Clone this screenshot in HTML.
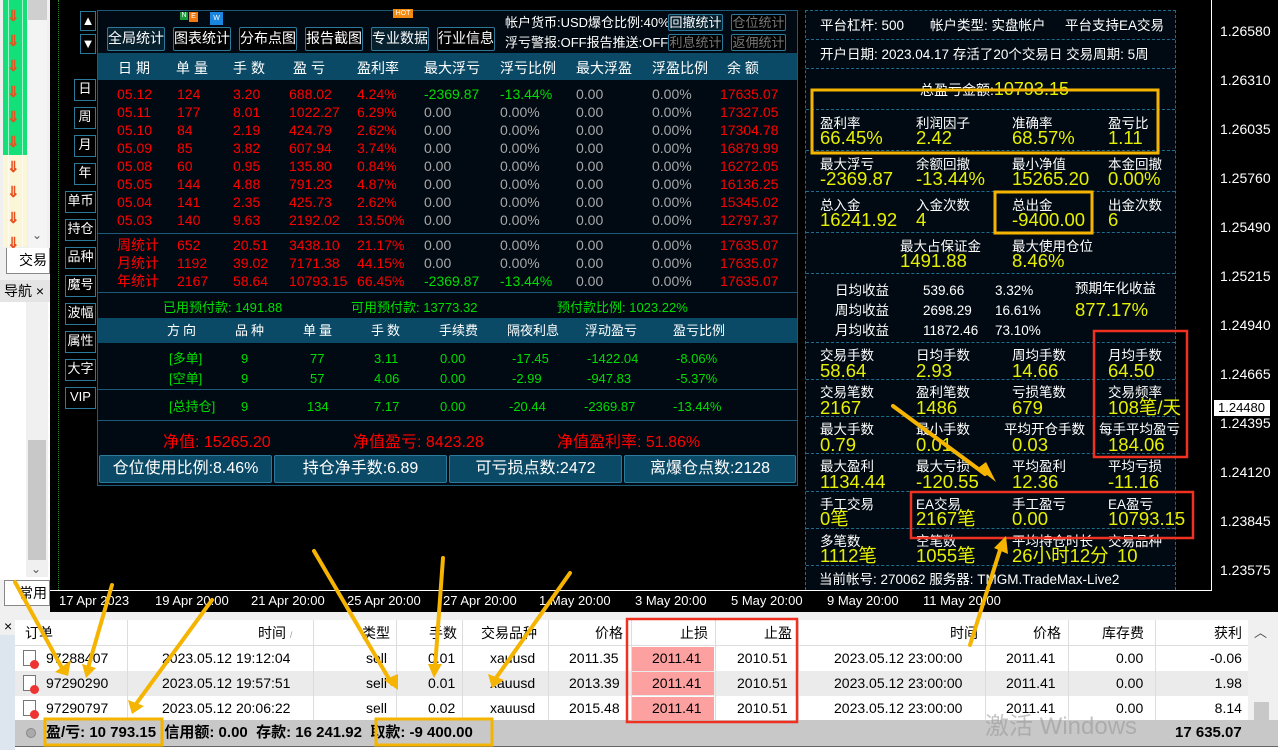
<!DOCTYPE html>
<html><head><meta charset="utf-8"><style>
*{margin:0;padding:0;box-sizing:border-box}
body{width:1278px;height:750px;overflow:hidden;position:relative;background:#000;font-family:"Liberation Sans","Noto Sans CJK SC",sans-serif;}
div,span{position:absolute;white-space:nowrap}
.t{font-size:14px;line-height:18px}
.r{color:#f00}.g{color:#0d0}.w{color:#fff}.gy{color:#a8a8a8}
.btn{border:1px solid #2b7a9c;background:#06202e;color:#fff;font-size:14px;line-height:20px;text-align:center;border-radius:2px}
.sb{border:1px solid #2b7a9c;background:#000;color:#fff;font-size:13px;line-height:18px;text-align:center}
.hl{height:0;border-top:1px dashed #1d6e8e}
.lb{color:#fff;font-size:13.5px;line-height:16px}
.v{color:#e6f000;font-size:18.5px;line-height:20px}
.tc{font-size:14px;line-height:24px;color:#000}
</style></head><body>
<!-- left toolbar -->
<div style="left:0;top:0;width:50px;height:620px;background:#f0f0f0"></div>
<div style="left:3px;top:0;width:24px;height:155px;background:#14e07a"></div>
<div style="left:3px;top:155px;width:24px;height:92px;background:#fbf6d8"></div>
<div style="left:8px;top:0;width:1px;height:247px;background:rgba(255,255,255,.6)"></div>
<div style="left:22px;top:0;width:1px;height:247px;background:rgba(255,255,255,.6)"></div>
<div style="left:28px;top:0;width:19px;height:248px;background:#f4f4f4"></div>
<div style="left:28px;top:0;width:19px;height:20px;background:#cfcfcf"></div>
<div style="left:7px;top:4px;color:#e85020;font-weight:bold;font-size:15px;line-height:25.2px;white-space:normal;width:16px">⇓<br>⇓<br>⇓<br>⇓<br>⇓<br>⇓<br>⇓<br>⇓<br>⇓<br>⇓</div>
<div style="left:32px;top:228px;color:#555;font-size:12px">⌄</div>
<div style="left:6px;top:248px;width:44px;height:26px;background:#fff;border:1px solid #888;border-top:none;font-size:14px;line-height:24px;padding-left:12px">交易</div>
<div style="left:0;top:280px;width:50px;height:22px;background:#e4e4e4;font-size:14px;line-height:22px;padding-left:4px">导航 ×</div>
<div style="left:0;top:302px;width:50px;height:278px;background:#fff"></div>
<div style="left:26px;top:302px;width:22px;height:275px;background:#f0f0f0"></div>
<div style="left:28px;top:440px;width:18px;height:120px;background:#c8c8c8"></div>
<div style="left:31px;top:562px;color:#555;font-size:12px">⌄</div>
<div style="left:4px;top:580px;width:46px;height:26px;background:#fff;border:1px solid #888;font-size:14px;line-height:24px;padding-left:14px">常用</div>
<!-- chart line -->
<div style="left:58px;top:0;width:0;height:590px;border-left:1px dotted #2a8a2a"></div>
<div style="left:1211px;top:0;width:1px;height:590px;background:#fff"></div>
<span class="t w" style="left:1220px;top:22px">1.26580</span>
<span class="t w" style="left:1220px;top:71px">1.26310</span>
<span class="t w" style="left:1220px;top:120px">1.26035</span>
<span class="t w" style="left:1220px;top:169px">1.25760</span>
<span class="t w" style="left:1220px;top:218px">1.25490</span>
<span class="t w" style="left:1220px;top:267px">1.25215</span>
<span class="t w" style="left:1220px;top:316px">1.24940</span>
<span class="t w" style="left:1220px;top:365px">1.24665</span>
<div style="left:1214px;top:400px;width:56px;height:16px;background:#fff;color:#000;font-size:13px;line-height:16px;padding-left:4px">1.24480</div>
<span class="t w" style="left:1220px;top:414px">1.24395</span>
<span class="t w" style="left:1220px;top:463px">1.24120</span>
<span class="t w" style="left:1220px;top:512px">1.23845</span>
<span class="t w" style="left:1220px;top:561px">1.23575</span>
<!-- x axis -->
<div style="left:50px;top:590px;width:1162px;height:1px;background:#fff"></div>
<span class="t w" style="left:59px;top:592px;font-size:13px">17 Apr 2023</span>
<span class="t w" style="left:155px;top:592px;font-size:13px">19 Apr 20:00</span>
<span class="t w" style="left:251px;top:592px;font-size:13px">21 Apr 20:00</span>
<span class="t w" style="left:347px;top:592px;font-size:13px">25 Apr 20:00</span>
<span class="t w" style="left:443px;top:592px;font-size:13px">27 Apr 20:00</span>
<span class="t w" style="left:539px;top:592px;font-size:13px">1 May 20:00</span>
<span class="t w" style="left:635px;top:592px;font-size:13px">3 May 20:00</span>
<span class="t w" style="left:731px;top:592px;font-size:13px">5 May 20:00</span>
<span class="t w" style="left:827px;top:592px;font-size:13px">9 May 20:00</span>
<span class="t w" style="left:923px;top:592px;font-size:13px">11 May 20:00</span>
<!-- side buttons -->
<div class="sb" style="left:80px;top:11px;width:16px;height:20px">▲</div>
<div class="sb" style="left:80px;top:34px;width:16px;height:20px">▼</div>
<div class="sb" style="left:74px;top:79px;width:22px;height:22px">日</div>
<div class="sb" style="left:74px;top:107px;width:22px;height:22px">周</div>
<div class="sb" style="left:74px;top:135px;width:22px;height:22px">月</div>
<div class="sb" style="left:74px;top:163px;width:22px;height:22px">年</div>
<div class="sb" style="left:65px;top:191px;width:31px;height:22px">单币</div>
<div class="sb" style="left:65px;top:219px;width:31px;height:22px">持仓</div>
<div class="sb" style="left:65px;top:247px;width:31px;height:22px">品种</div>
<div class="sb" style="left:65px;top:275px;width:31px;height:22px">魔号</div>
<div class="sb" style="left:65px;top:303px;width:31px;height:22px">波幅</div>
<div class="sb" style="left:65px;top:331px;width:31px;height:22px">属性</div>
<div class="sb" style="left:65px;top:359px;width:31px;height:22px">大字</div>
<div class="sb" style="left:65px;top:387px;width:31px;height:22px">VIP</div>
<!-- main panel -->
<div style="left:97px;top:10px;width:701px;height:476px;background:#010a12;border:1px solid #1b5a78"></div>
<div style="left:180px;top:12px;width:8px;height:8px;background:#1a9a3a;font-size:7px;color:#fff;line-height:8px;text-align:center">N</div>
<div style="left:189px;top:12px;width:9px;height:10px;background:#f07a10;font-size:7px;color:#fff;line-height:10px;text-align:center">E</div>
<div style="left:210px;top:12px;width:13px;height:13px;background:#1a86e0;font-size:7px;color:#fff;line-height:13px;text-align:center">W</div>
<div style="left:393px;top:9px;width:20px;height:9px;background:#f08a10;font-size:7px;color:#fff;line-height:9px;text-align:center">HOT</div>
<div class="btn" style="left:107px;top:27px;width:58px;height:24px">全局统计</div>
<div class="btn" style="left:173px;top:27px;width:58px;height:24px;background:#000">图表统计</div>
<div class="btn" style="left:239px;top:27px;width:58px;height:24px;background:#000">分布点图</div>
<div class="btn" style="left:305px;top:27px;width:58px;height:24px;background:#000">报告截图</div>
<div class="btn" style="left:371px;top:27px;width:58px;height:24px">专业数据</div>
<div class="btn" style="left:437px;top:27px;width:58px;height:24px;background:#000">行业信息</div>
<span class="t w" style="left:505px;top:14px;font-size:13px">帐户货币:USD爆仓比例:40%</span>
<span class="t w" style="left:505px;top:34px;font-size:13px">浮亏警报:OFF报告推送:OFF</span>
<div class="btn" style="left:668px;top:14px;width:55px;height:17px;font-size:13px;line-height:15px">回撤统计</div>
<div class="btn" style="left:731px;top:14px;width:55px;height:17px;font-size:13px;line-height:15px;color:#777;background:#000">仓位统计</div>
<div class="btn" style="left:668px;top:34px;width:55px;height:17px;font-size:13px;line-height:15px;color:#777;background:#000">利息统计</div>
<div class="btn" style="left:731px;top:34px;width:55px;height:17px;font-size:13px;line-height:15px;color:#777;background:#000">返佣统计</div>
<div style="left:98px;top:53px;width:699px;height:27px;background:#0b4a66"></div>
<span class="t w" style="left:118px;top:59px;letter-spacing:4px">日期</span>
<span class="t w" style="left:176px;top:59px;letter-spacing:4px">单量</span>
<span class="t w" style="left:233px;top:59px;letter-spacing:4px">手数</span>
<span class="t w" style="left:293px;top:59px;letter-spacing:4px">盈亏</span>
<span class="t w" style="left:357px;top:59px">盈利率</span>
<span class="t w" style="left:424px;top:59px">最大浮亏</span>
<span class="t w" style="left:500px;top:59px">浮亏比例</span>
<span class="t w" style="left:576px;top:59px">最大浮盈</span>
<span class="t w" style="left:652px;top:59px">浮盈比例</span>
<span class="t w" style="left:727px;top:59px">余 额</span>
<div class="t r" style="left:117px;top:85px;line-height:18px;white-space:pre">05.12
05.11
05.10
05.09
05.08
05.05
05.04
05.03</div>
<div class="t r" style="left:177px;top:85px;white-space:pre">124
177
84
85
60
144
141
140</div>
<div class="t r" style="left:233px;top:85px;white-space:pre">3.20
8.01
2.19
3.82
0.95
4.88
2.35
9.63</div>
<div class="t r" style="left:289px;top:85px;white-space:pre">688.02
1022.27
424.79
607.94
135.80
791.23
425.73
2192.02</div>
<div class="t r" style="left:357px;top:85px;white-space:pre">4.24%
6.29%
2.62%
3.74%
0.84%
4.87%
2.62%
13.50%</div>
<div class="t gy" style="left:424px;top:85px;white-space:pre"><span class="g" style="position:static">-2369.87</span>
0.00
0.00
0.00
0.00
0.00
0.00
0.00</div>
<div class="t gy" style="left:500px;top:85px;white-space:pre"><span class="g" style="position:static">-13.44%</span>
0.00%
0.00%
0.00%
0.00%
0.00%
0.00%
0.00%</div>
<div class="t gy" style="left:576px;top:85px;white-space:pre">0.00
0.00
0.00
0.00
0.00
0.00
0.00
0.00</div>
<div class="t gy" style="left:652px;top:85px;white-space:pre">0.00%
0.00%
0.00%
0.00%
0.00%
0.00%
0.00%
0.00%</div>
<div class="t r" style="left:720px;top:85px;white-space:pre">17635.07
17327.05
17304.78
16879.99
16272.05
16136.25
15345.02
12797.37</div>
<div style="left:98px;top:233px;width:699px;height:1px;background:#1b5a78"></div>
<div class="t r" style="left:117px;top:236px;white-space:pre">周统计
月统计
年统计</div>
<div class="t r" style="left:177px;top:236px;white-space:pre">652
1192
2167</div>
<div class="t r" style="left:233px;top:236px;white-space:pre">20.51
39.02
58.64</div>
<div class="t r" style="left:289px;top:236px;white-space:pre">3438.10
7171.38
10793.15</div>
<div class="t r" style="left:357px;top:236px;white-space:pre">21.17%
44.15%
66.45%</div>
<div class="t gy" style="left:424px;top:236px;white-space:pre">0.00
0.00
<span class="g" style="position:static">-2369.87</span></div>
<div class="t gy" style="left:500px;top:236px;white-space:pre">0.00%
0.00%
<span class="g" style="position:static">-13.44%</span></div>
<div class="t gy" style="left:576px;top:236px;white-space:pre">0.00
0.00
0.00</div>
<div class="t gy" style="left:652px;top:236px;white-space:pre">0.00%
0.00%
0.00%</div>
<div class="t r" style="left:720px;top:236px;white-space:pre">17635.07
17635.07
17635.07</div>
<div style="left:98px;top:292px;width:699px;height:1px;background:#1b5a78"></div>
<span class="t g" style="left:163px;top:299px;font-size:13px">已用预付款: 1491.88</span>
<span class="t g" style="left:351px;top:299px;font-size:13px">可用预付款: 13773.32</span>
<span class="t g" style="left:557px;top:299px;font-size:13px">预付款比例: 1023.22%</span>
<div style="left:98px;top:318px;width:699px;height:25px;background:#0b4a66"></div>
<span class="t w" style="left:167px;top:322px;font-size:13px;letter-spacing:3px">方向</span>
<span class="t w" style="left:235px;top:322px;font-size:13px;letter-spacing:3px">品种</span>
<span class="t w" style="left:303px;top:322px;font-size:13px;letter-spacing:3px">单量</span>
<span class="t w" style="left:371px;top:322px;font-size:13px;letter-spacing:3px">手数</span>
<span class="t w" style="left:439px;top:322px;font-size:13px">手续费</span>
<span class="t w" style="left:507px;top:322px;font-size:13px">隔夜利息</span>
<span class="t w" style="left:585px;top:322px;font-size:13px">浮动盈亏</span>
<span class="t w" style="left:673px;top:322px;font-size:13px">盈亏比例</span>
<div class="t g" style="left:169px;top:349px;font-size:13px;line-height:20px;white-space:pre">[多单]
[空单]</div>
<div class="t g" style="left:241px;top:349px;font-size:13px;line-height:20px;white-space:pre">9
9</div>
<div class="t g" style="left:310px;top:349px;font-size:13px;line-height:20px;white-space:pre">77
57</div>
<div class="t g" style="left:374px;top:349px;font-size:13px;line-height:20px;white-space:pre">3.11
4.06</div>
<div class="t g" style="left:440px;top:349px;font-size:13px;line-height:20px;white-space:pre">0.00
0.00</div>
<div class="t g" style="left:512px;top:349px;font-size:13px;line-height:20px;white-space:pre">-17.45
-2.99</div>
<div class="t g" style="left:587px;top:349px;font-size:13px;line-height:20px;white-space:pre">-1422.04
-947.83</div>
<div class="t g" style="left:676px;top:349px;font-size:13px;line-height:20px;white-space:pre">-8.06%
-5.37%</div>
<div style="left:98px;top:389px;width:699px;height:1px;background:#1b5a78"></div>
<span class="t g" style="left:169px;top:398px;font-size:13px">[总持仓]</span>
<span class="t g" style="left:241px;top:398px;font-size:13px">9</span>
<span class="t g" style="left:307px;top:398px;font-size:13px">134</span>
<span class="t g" style="left:374px;top:398px;font-size:13px">7.17</span>
<span class="t g" style="left:440px;top:398px;font-size:13px">0.00</span>
<span class="t g" style="left:509px;top:398px;font-size:13px">-20.44</span>
<span class="t g" style="left:584px;top:398px;font-size:13px">-2369.87</span>
<span class="t g" style="left:673px;top:398px;font-size:13px">-13.44%</span>
<div style="left:98px;top:420px;width:699px;height:1px;background:#1b5a78"></div>
<span class="r" style="left:163px;top:428px;font-size:16px">净值: 15265.20</span>
<span class="r" style="left:353px;top:428px;font-size:16px">净值盈亏: 8423.28</span>
<span class="r" style="left:557px;top:428px;font-size:16px">净值盈利率: 51.86%</span>
<div class="btn" style="left:99px;top:455px;width:173px;height:28px;background:#0b4a66;font-size:16px;line-height:26px">仓位使用比例:8.46%</div>
<div class="btn" style="left:274px;top:455px;width:173px;height:28px;background:#0b4a66;font-size:16px;line-height:26px">持仓净手数:6.89</div>
<div class="btn" style="left:449px;top:455px;width:173px;height:28px;background:#0b4a66;font-size:16px;line-height:26px">可亏损点数:2472</div>
<div class="btn" style="left:624px;top:455px;width:172px;height:28px;background:#0b4a66;font-size:16px;line-height:26px">离爆仓点数:2128</div>
<!-- right panel -->
<div style="left:805px;top:10px;width:371px;height:580px;background:#010a12;border-left:1px dashed #1d6e8e;border-right:1px dashed #1d6e8e;border-top:1px dashed #1d6e8e"></div>
<span class="lb" style="left:820px;top:18px">平台杠杆: 500</span>
<span class="lb" style="left:930px;top:18px">帐户类型: 实盘帐户</span>
<span class="lb" style="left:1065px;top:18px">平台支持EA交易</span>
<div class="hl" style="left:806px;top:39px;width:369px"></div>
<span class="lb" style="left:820px;top:47px">开户日期: 2023.04.17 存活了20个交易日 交易周期: 5周</span>
<div class="hl" style="left:806px;top:68px;width:369px"></div>
<span class="lb" style="left:920px;top:81px;font-size:14px">总盈亏金额:<span style="position:static;color:#e6f000;font-size:18px">10793.15</span></span>
<div class="hl" style="left:806px;top:109px;width:369px"></div>
<span class="lb" style="left:820px;top:116px">盈利率</span><span class="v" style="left:820px;top:128px">66.45%</span>
<span class="lb" style="left:916px;top:116px">利润因子</span><span class="v" style="left:916px;top:128px">2.42</span>
<span class="lb" style="left:1012px;top:116px">准确率</span><span class="v" style="left:1012px;top:128px">68.57%</span>
<span class="lb" style="left:1108px;top:116px">盈亏比</span><span class="v" style="left:1108px;top:128px">1.11</span>
<div class="hl" style="left:806px;top:150px;width:369px"></div>
<span class="lb" style="left:820px;top:157px">最大浮亏</span><span class="v" style="left:820px;top:169px">-2369.87</span>
<span class="lb" style="left:916px;top:157px">余额回撤</span><span class="v" style="left:916px;top:169px">-13.44%</span>
<span class="lb" style="left:1012px;top:157px">最小净值</span><span class="v" style="left:1012px;top:169px">15265.20</span>
<span class="lb" style="left:1108px;top:157px">本金回撤</span><span class="v" style="left:1108px;top:169px">0.00%</span>
<div class="hl" style="left:806px;top:191px;width:369px"></div>
<span class="lb" style="left:820px;top:198px">总入金</span><span class="v" style="left:820px;top:210px">16241.92</span>
<span class="lb" style="left:916px;top:198px">入金次数</span><span class="v" style="left:916px;top:210px">4</span>
<span class="lb" style="left:1012px;top:198px">总出金</span><span class="v" style="left:1012px;top:210px">-9400.00</span>
<span class="lb" style="left:1108px;top:198px">出金次数</span><span class="v" style="left:1108px;top:210px">6</span>
<div class="hl" style="left:806px;top:232px;width:369px"></div>
<span class="lb" style="left:900px;top:239px">最大占保证金</span><span class="v" style="left:900px;top:251px">1491.88</span>
<span class="lb" style="left:1012px;top:239px">最大使用仓位</span><span class="v" style="left:1012px;top:251px">8.46%</span>
<div class="hl" style="left:806px;top:273px;width:369px"></div>
<div class="lb" style="left:835px;top:281px;line-height:20px;white-space:pre">日均收益
周均收益
月均收益</div>
<div class="lb" style="left:923px;top:281px;line-height:20px;white-space:pre">539.66
2698.29
11872.46</div>
<div class="lb" style="left:995px;top:281px;line-height:20px;white-space:pre">3.32%
16.61%
73.10%</div>
<span class="lb" style="left:1075px;top:281px">预期年化收益</span>
<span class="v" style="left:1075px;top:300px">877.17%</span>
<div class="hl" style="left:806px;top:342px;width:369px"></div>
<span class="lb" style="left:820px;top:348px">交易手数</span><span class="v" style="left:820px;top:361px">58.64</span>
<span class="lb" style="left:916px;top:348px">日均手数</span><span class="v" style="left:916px;top:361px">2.93</span>
<span class="lb" style="left:1012px;top:348px">周均手数</span><span class="v" style="left:1012px;top:361px">14.66</span>
<span class="lb" style="left:1108px;top:348px">月均手数</span><span class="v" style="left:1108px;top:361px">64.50</span>
<div class="hl" style="left:806px;top:379px;width:369px"></div>
<span class="lb" style="left:820px;top:385px">交易笔数</span><span class="v" style="left:820px;top:398px">2167</span>
<span class="lb" style="left:916px;top:385px">盈利笔数</span><span class="v" style="left:916px;top:398px">1486</span>
<span class="lb" style="left:1012px;top:385px">亏损笔数</span><span class="v" style="left:1012px;top:398px">679</span>
<span class="lb" style="left:1108px;top:385px">交易频率</span><span class="v" style="left:1108px;top:398px">108笔/天</span>
<div class="hl" style="left:806px;top:416px;width:369px"></div>
<span class="lb" style="left:820px;top:422px">最大手数</span><span class="v" style="left:820px;top:435px">0.79</span>
<span class="lb" style="left:916px;top:422px">最小手数</span><span class="v" style="left:916px;top:435px">0.01</span>
<span class="lb" style="left:1004px;top:422px">平均开仓手数</span><span class="v" style="left:1012px;top:435px">0.03</span>
<span class="lb" style="left:1099px;top:422px">每手平均盈亏</span><span class="v" style="left:1108px;top:435px">184.06</span>
<div class="hl" style="left:806px;top:453px;width:369px"></div>
<span class="lb" style="left:820px;top:459px">最大盈利</span><span class="v" style="left:820px;top:472px">1134.44</span>
<span class="lb" style="left:916px;top:459px">最大亏损</span><span class="v" style="left:916px;top:472px">-120.55</span>
<span class="lb" style="left:1012px;top:459px">平均盈利</span><span class="v" style="left:1012px;top:472px">12.36</span>
<span class="lb" style="left:1108px;top:459px">平均亏损</span><span class="v" style="left:1108px;top:472px">-11.16</span>
<div class="hl" style="left:806px;top:491px;width:369px"></div>
<span class="lb" style="left:820px;top:497px">手工交易</span><span class="v" style="left:820px;top:509px">0笔</span>
<span class="lb" style="left:916px;top:497px">EA交易</span><span class="v" style="left:916px;top:509px">2167笔</span>
<span class="lb" style="left:1012px;top:497px">手工盈亏</span><span class="v" style="left:1012px;top:509px">0.00</span>
<span class="lb" style="left:1108px;top:497px">EA盈亏</span><span class="v" style="left:1108px;top:509px">10793.15</span>
<div class="hl" style="left:806px;top:528px;width:369px"></div>
<span class="lb" style="left:820px;top:534px">多笔数</span><span class="v" style="left:820px;top:546px">1112笔</span>
<span class="lb" style="left:916px;top:534px">空笔数</span><span class="v" style="left:916px;top:546px">1055笔</span>
<span class="lb" style="left:1012px;top:534px">平均持仓时长</span><span class="v" style="left:1012px;top:546px">26小时12分</span>
<span class="lb" style="left:1108px;top:534px">交易品种</span><span class="v" style="left:1117px;top:546px">10</span>
<div class="hl" style="left:806px;top:565px;width:369px"></div>
<span class="lb" style="left:819px;top:572px">当前帐号: 270062 服务器: TMGM.TradeMax-Live2</span>
<!-- bottom terminal -->
<div style="left:0;top:612px;width:1278px;height:138px;background:#f0f0f0"></div>
<span style="left:4px;top:618px;font-size:14px">×</span>
<div style="left:0;top:635px;width:15px;height:115px;background:#dde6ee"></div>
<div style="left:15px;top:620px;width:1233px;height:101px;background:#fff"></div>
<div style="left:15px;top:620px;width:1233px;height:26px;background:#fff;border-bottom:1px solid #ddd"></div>
<div style="left:15px;top:671px;width:1233px;height:25px;background:#ebebeb"></div>
<div style="left:1248px;top:620px;width:22px;height:101px;background:#f0f0f0"></div>
<div style="left:1254px;top:702px;width:15px;height:19px;background:#c8c8c8"></div>
<span style="left:1254px;top:622px;font-size:13px;color:#444">︿</span>
<div style="left:15px;top:720px;width:1263px;height:26px;background:#c8c8c8"></div>
<div style="left:15px;top:746px;width:1263px;height:4px;background:#fff;border-top:1px solid #666"></div>
<!-- column borders -->
<div style="left:127px;top:620px;width:1px;height:100px;background:#ddd"></div>
<div style="left:313px;top:620px;width:1px;height:100px;background:#ddd"></div>
<div style="left:396px;top:620px;width:1px;height:100px;background:#ddd"></div>
<div style="left:462px;top:620px;width:1px;height:100px;background:#ddd"></div>
<div style="left:548px;top:620px;width:1px;height:100px;background:#ddd"></div>
<div style="left:631px;top:620px;width:1px;height:100px;background:#ddd"></div>
<div style="left:715px;top:620px;width:1px;height:100px;background:#ddd"></div>
<div style="left:798px;top:620px;width:1px;height:100px;background:#ddd"></div>
<div style="left:985px;top:620px;width:1px;height:100px;background:#ddd"></div>
<div style="left:1068px;top:620px;width:1px;height:100px;background:#ddd"></div>
<div style="left:1155px;top:620px;width:1px;height:100px;background:#ddd"></div>
<div style="left:632px;top:647px;width:82px;height:24px;background:#fca0a0"></div>
<div style="left:632px;top:672px;width:82px;height:23px;background:#fca0a0"></div>
<div style="left:632px;top:697px;width:82px;height:23px;background:#fca0a0"></div>
<span class="tc" style="left:25px;top:621px">订单</span>
<span class="tc" style="left:258px;top:621px">时间 <span style="position:static;font-size:9px;color:#999">/</span></span>
<span class="tc" style="left:362px;top:621px">类型</span>
<span class="tc" style="left:429px;top:621px">手数</span>
<span class="tc" style="left:481px;top:621px">交易品种</span>
<span class="tc" style="left:595px;top:621px">价格</span>
<span class="tc" style="left:680px;top:621px">止损</span>
<span class="tc" style="left:764px;top:621px">止盈</span>
<span class="tc" style="left:950px;top:621px">时间</span>
<span class="tc" style="left:1033px;top:621px">价格</span>
<span class="tc" style="left:1102px;top:621px">库存费</span>
<span class="tc" style="left:1214px;top:621px">获利</span>
<!-- rows -->
<div style="left:23px;top:650px;width:13px;height:16px;border:1px solid #777;background:#fff"></div><div style="left:30px;top:660px;width:9px;height:9px;border-radius:50%;background:#e33"></div>
<div style="left:23px;top:675px;width:13px;height:16px;border:1px solid #777;background:#fff"></div><div style="left:30px;top:685px;width:9px;height:9px;border-radius:50%;background:#e33"></div>
<div style="left:23px;top:700px;width:13px;height:16px;border:1px solid #777;background:#fff"></div><div style="left:30px;top:710px;width:9px;height:9px;border-radius:50%;background:#e33"></div>
<div class="tc" style="left:46px;top:646px;line-height:25px;white-space:pre">97288407
97290290
97290797</div>
<div class="tc" style="left:162px;top:646px;line-height:25px;white-space:pre">2023.05.12 19:12:04
2023.05.12 19:57:51
2023.05.12 20:06:22</div>
<div class="tc" style="left:366px;top:646px;line-height:25px;white-space:pre">sell
sell
sell</div>
<div class="tc" style="left:428px;top:646px;line-height:25px;white-space:pre">0.01
0.01
0.02</div>
<div class="tc" style="left:490px;top:646px;line-height:25px;white-space:pre">xauusd
xauusd
xauusd</div>
<div class="tc" style="left:569px;top:646px;line-height:25px;white-space:pre">2011.35
2013.39
2015.48</div>
<div class="tc" style="left:652px;top:646px;line-height:25px;white-space:pre">2011.41
2011.41
2011.41</div>
<div class="tc" style="left:737px;top:646px;line-height:25px;white-space:pre">2010.51
2010.51
2010.51</div>
<div class="tc" style="left:834px;top:646px;line-height:25px;white-space:pre">2023.05.12 23:00:00
2023.05.12 23:00:00
2023.05.12 23:00:00</div>
<div class="tc" style="left:1006px;top:646px;line-height:25px;white-space:pre">2011.41
2011.41
2011.41</div>
<div class="tc" style="left:1116px;top:646px;line-height:25px;white-space:pre">0.00
0.00
0.00</div>
<div class="tc" style="left:1210px;top:646px;line-height:25px;white-space:pre;text-align:right">-0.06
 1.98
 8.14</div>
<div style="left:26px;top:728px;width:10px;height:10px;border-radius:50%;background:#aaa;border:1px solid #888"></div>
<span style="left:46px;top:723px;font-size:15px;line-height:20px;font-weight:bold">盈/亏: 10 793.15 &nbsp;信用额: 0.00 &nbsp;存款: 16 241.92 &nbsp;取款: -9 400.00</span>
<span style="left:1175px;top:723px;font-size:15px;line-height:20px;font-weight:bold">17 635.07</span>
<span style="left:985px;top:706px;font-size:24px;color:rgba(150,150,150,.55)">激活 Windows</span>
<!-- overlays -->
<svg style="position:absolute;left:0;top:0" width="1278" height="750">
<g fill="none" stroke-width="3">
<rect x="812" y="90" width="346" height="63" stroke="#f5b400"/>
<rect x="995" y="192" width="97" height="41" stroke="#f5b400"/>
<rect x="45" y="719" width="117" height="26" stroke="#f5b400"/>
<rect x="376" y="719" width="116" height="26" stroke="#f5b400"/>
<rect x="1094" y="331" width="93" height="126" stroke="#f03020" stroke-width="2.5"/>
<rect x="911" y="492" width="282" height="46" stroke="#f03020" stroke-width="2.5"/>
<rect x="627" y="619" width="170" height="103" stroke="#f03020" stroke-width="2.5"/>
</g>
<g stroke="#f5b400" stroke-width="4" stroke-linecap="round">
<line x1="15" y1="582" x2="62" y2="668"/>
<line x1="112" y1="585" x2="88" y2="668"/>
<line x1="212" y1="600" x2="136" y2="704"/>
<line x1="314" y1="551" x2="392" y2="684"/>
<line x1="443" y1="558" x2="435" y2="668"/>
<line x1="570" y1="573" x2="496" y2="678"/>
<line x1="893" y1="406" x2="985" y2="474"/>
<line x1="1000" y1="550" x2="970" y2="645"/>
</g>
<g fill="#f5b400">
<polygon points="55,672 68,676 71,660"/>
<polygon points="82,664 86,678 96,668"/>
<polygon points="128,700 132,714 144,706"/>
<polygon points="384,680 398,690 398,674"/>
<polygon points="428,664 434,678 442,664"/>
<polygon points="488,674 492,688 504,680"/>
<polygon points="978,468 996,482 986,462"/>
<polygon points="994,548 1006,536 1008,554"/>
</g>
</svg>
</body></html>
